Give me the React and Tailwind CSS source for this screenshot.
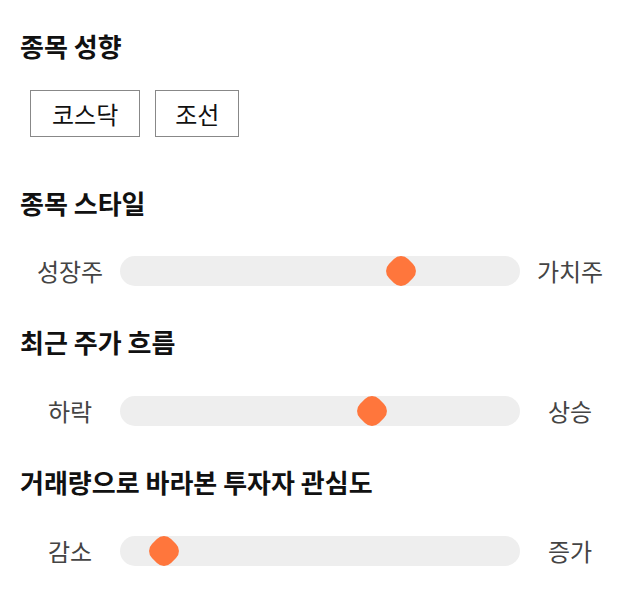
import React from "react";

const font = { fontFamily: '"Noto Sans CJK KR", "Noto Sans", sans-serif' };

function Slider({ left, right, pos }) {
  return (
    <div className="flex items-center h-[30px]">
      <div className="w-[100px] text-center text-[24px] text-[#444] leading-none">{left}</div>
      <div className="relative flex-1 h-[30px] rounded-full bg-[#eeeeee]">
        <div
          className="absolute top-1/2 w-[27px] h-[27px] -translate-x-1/2 -translate-y-1/2 rounded-[10px] rotate-45 bg-[#ff763c]"
          style={{ left: pos }}
        />
      </div>
      <div className="w-[100px] text-center text-[24px] text-[#444] leading-none">{right}</div>
    </div>
  );
}

function Heading({ children }) {
  return <h2 className="text-[26px] font-bold leading-[32px] text-[#111]">{children}</h2>;
}

export default function App() {
  return (
    <div className="w-[640px] h-[606px] bg-white px-5 pt-[30px]" style={font}>
      <Heading>종목 성향</Heading>
      <div className="flex gap-[15px] ml-[10px] mt-[28px]">
        <div className="h-[47px] px-[21px] border border-[#888] flex items-center text-[24px] text-[#111]">코스닥</div>
        <div className="h-[47px] px-[19px] border border-[#888] flex items-center text-[24px] text-[#111]">조선</div>
      </div>
      <div className="mt-[50px]">
        <Heading>종목 스타일</Heading>
        <div className="mt-[37px]">
          <Slider left="성장주" right="가치주" pos={281} />
        </div>
      </div>
      <div className="mt-[40px]">
        <Heading>최근 주가 흐름</Heading>
        <div className="mt-[38px]">
          <Slider left="하락" right="상승" pos={252} />
        </div>
      </div>
      <div className="mt-[40px]">
        <Heading>거래량으로 바라본 투자자 관심도</Heading>
        <div className="mt-[38px]">
          <Slider left="감소" right="증가" pos={44} />
        </div>
      </div>
    </div>
  );
}
